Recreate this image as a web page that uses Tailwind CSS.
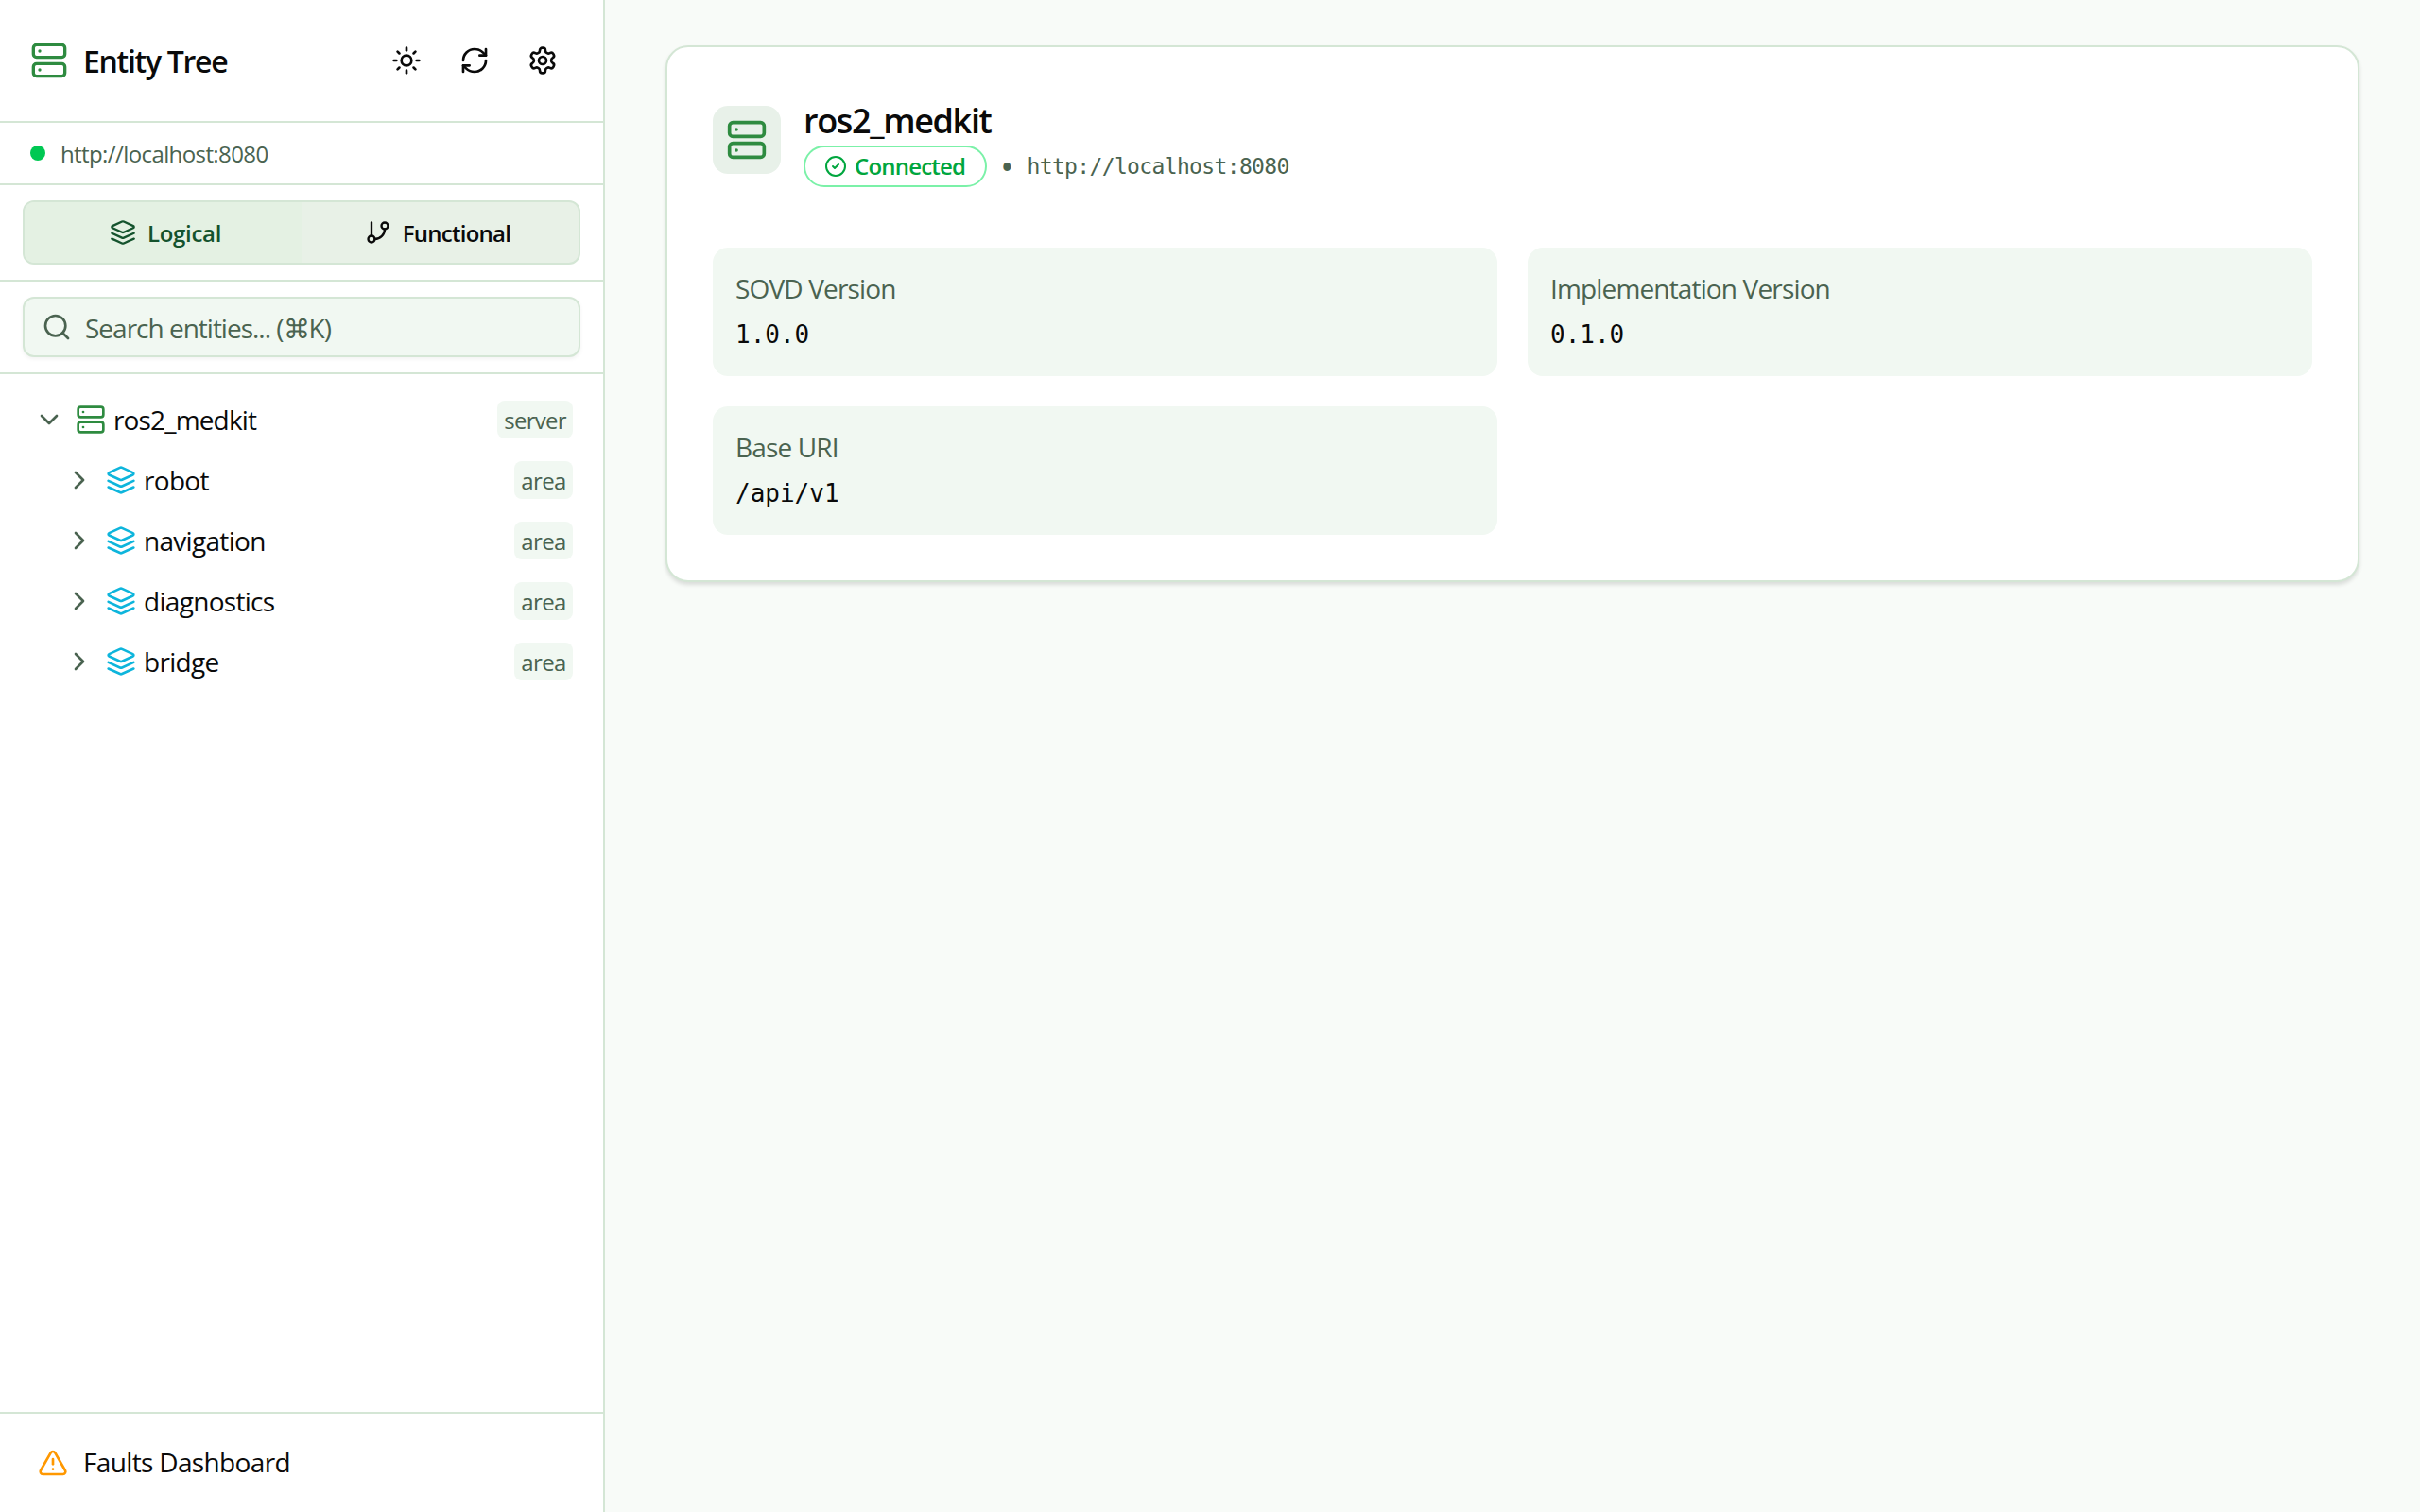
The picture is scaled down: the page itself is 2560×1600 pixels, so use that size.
<!DOCTYPE html>
<html lang="en">
<head>
<meta charset="utf-8">
<title>Entity Tree</title>
<script src="https://cdn.jsdelivr.net/npm/@tailwindcss/browser@4"></script>
</head>
<body class="h-[1600px] w-[2560px] overflow-hidden bg-[#f8fbf8] font-['Open_Sans',sans-serif] text-[#0a0a0a]">
<div class="flex h-full">
  <aside class="flex h-full w-[640px] flex-col border-r-2 border-[#d4e6d5] bg-white">
    <header class="flex h-[130px] items-center justify-between border-b-2 border-[#d4e6d5] pl-[32px] pr-[32px]">
      <div class="flex items-center gap-[16px]">
        <svg class="size-[40px] text-[#2e8b40]" viewBox="0 0 24 24" fill="none" stroke="currentColor" stroke-width="2" stroke-linecap="round" stroke-linejoin="round"><rect width="20" height="8" x="2" y="2" rx="2"/><rect width="20" height="8" x="2" y="14" rx="2"/><line x1="6" x2="6.01" y1="6" y2="6"/><line x1="6" x2="6.01" y1="18" y2="18"/></svg>
        <h1 class="pt-[2px] text-[32px] font-semibold tracking-[-1.3px]">Entity Tree</h1>
      </div>
      <div class="flex items-center gap-[8px]">
        <button class="p-[16px]"><svg class="size-[32px]" viewBox="0 0 24 24" fill="none" stroke="currentColor" stroke-width="2" stroke-linecap="round" stroke-linejoin="round"><circle cx="12" cy="12" r="4"/><path d="M12 2v2"/><path d="M12 20v2"/><path d="m4.93 4.93 1.41 1.41"/><path d="m17.66 17.66 1.41 1.41"/><path d="M2 12h2"/><path d="M20 12h2"/><path d="m6.34 17.66-1.41 1.41"/><path d="m19.07 4.93-1.41 1.41"/></svg></button>
        <button class="p-[16px]"><svg class="size-[32px]" viewBox="0 0 24 24" fill="none" stroke="currentColor" stroke-width="2" stroke-linecap="round" stroke-linejoin="round"><path d="M3 12a9 9 0 0 1 9-9 9.75 9.75 0 0 1 6.74 2.74L21 8"/><path d="M21 3v5h-5"/><path d="M21 12a9 9 0 0 1-9 9 9.75 9.75 0 0 1-6.74-2.74L3 16"/><path d="M8 16H3v5"/></svg></button>
        <button class="p-[16px]"><svg class="size-[32px]" viewBox="0 0 24 24" fill="none" stroke="currentColor" stroke-width="2" stroke-linecap="round" stroke-linejoin="round"><path d="M12.22 2h-.44a2 2 0 0 0-2 2v.18a2 2 0 0 1-1 1.73l-.43.25a2 2 0 0 1-2 0l-.15-.08a2 2 0 0 0-2.73.73l-.22.38a2 2 0 0 0 .73 2.73l.15.1a2 2 0 0 1 1 1.72v.51a2 2 0 0 1-1 1.74l-.15.09a2 2 0 0 0-.73 2.73l.22.38a2 2 0 0 0 2.73.73l.15-.08a2 2 0 0 1 2 0l.43.25a2 2 0 0 1 1 1.73V20a2 2 0 0 0 2 2h.44a2 2 0 0 0 2-2v-.18a2 2 0 0 1 1-1.73l.43-.25a2 2 0 0 1 2 0l.15.08a2 2 0 0 0 2.73-.73l.22-.39a2 2 0 0 0-.73-2.73l-.15-.08a2 2 0 0 1-1-1.74v-.5a2 2 0 0 1 1-1.74l.15-.09a2 2 0 0 0 .73-2.73l-.22-.38a2 2 0 0 0-2.73-.73l-.15.08a2 2 0 0 1-2 0l-.43-.25a2 2 0 0 1-1-1.73V4a2 2 0 0 0-2-2z"/><circle cx="12" cy="12" r="3"/></svg></button>
      </div>
    </header>

    <div class="flex h-[66px] items-center gap-[16px] border-b-2 border-[#d4e6d5] pl-[32px]">
      <span class="size-[16px] rounded-full bg-[#00c853]"></span>
      <span class="pt-[2px] text-[24px] tracking-[-0.6px] text-[#4a6350]">http://localhost:8080</span>
    </div>

    <div class="border-b-2 border-[#d4e6d5] px-[24px] py-[16px]">
      <div class="flex h-[68px] rounded-[12px] border-2 border-[#d4e6d5] bg-[#e8f1e7] text-[24px] font-semibold">
        <button class="flex flex-1 items-center justify-center gap-[12px] rounded-l-[10px] bg-[#e4f1e3] pl-[5px] text-[#14532d]">
          <svg class="size-[28px]" viewBox="0 0 24 24" fill="none" stroke="currentColor" stroke-width="2" stroke-linecap="round" stroke-linejoin="round"><path d="m12.83 2.18a2 2 0 0 0-1.66 0L2.6 6.08a1 1 0 0 0 0 1.83l8.58 3.91a2 2 0 0 0 1.66 0l8.58-3.9a1 1 0 0 0 0-1.83Z"/><path d="m22 17.65-9.17 4.16a2 2 0 0 1-1.66 0L2 17.65"/><path d="m22 12.65-9.17 4.16a2 2 0 0 1-1.66 0L2 12.65"/></svg>
          <span class="pt-[2px] tracking-[-0.3px]">Logical</span>
        </button>
        <button class="flex flex-1 items-center justify-center gap-[12px] pr-[5px]">
          <svg class="size-[28px]" viewBox="0 0 24 24" fill="none" stroke="currentColor" stroke-width="2" stroke-linecap="round" stroke-linejoin="round"><line x1="6" x2="6" y1="3" y2="15"/><circle cx="18" cy="6" r="3"/><circle cx="6" cy="18" r="3"/><path d="M18 9a9 9 0 0 1-9 9"/></svg>
          <span class="pt-[2px] tracking-[-0.75px]">Functional</span>
        </button>
      </div>
    </div>

    <div class="border-b-2 border-[#d4e6d5] px-[24px] py-[16px]">
      <div class="flex h-[64px] items-center gap-[14px] rounded-[12px] border-2 border-[#d4e6d5] bg-[#f1f8f2] pl-[18px] text-[#4a6350] shadow-[0_2px_4px_rgba(0,0,0,0.05)]">
        <svg class="size-[32px]" viewBox="0 0 24 24" fill="none" stroke="currentColor" stroke-width="2" stroke-linecap="round" stroke-linejoin="round"><circle cx="11" cy="11" r="8"/><path d="m21 21-4.3-4.3"/></svg>
        <span class="pt-[2px] text-[28px] tracking-[-1px]">Search entities... (⌘K)</span>
      </div>
    </div>

    <nav class="flex-1 py-[16px] pl-[36px] pr-[32px]">
      <div class="flex h-[64px] items-center">
        <svg class="size-[32px] shrink-0 text-[#4a6350]" viewBox="0 0 24 24" fill="none" stroke="currentColor" stroke-width="2" stroke-linecap="round" stroke-linejoin="round"><path d="m6 9 6 6 6-6"/></svg>
        <svg class="ml-[12px] size-[32px] shrink-0 text-[#2e8b40]" viewBox="0 0 24 24" fill="none" stroke="currentColor" stroke-width="2" stroke-linecap="round" stroke-linejoin="round"><rect width="20" height="8" x="2" y="2" rx="2"/><rect width="20" height="8" x="2" y="14" rx="2"/><line x1="6" x2="6.01" y1="6" y2="6"/><line x1="6" x2="6.01" y1="18" y2="18"/></svg>
        <span class="ml-[8px] flex-1 text-[28px] tracking-[-0.85px]">ros2_medkit</span>
        <span class="flex h-[40px] w-[80px] items-center justify-center rounded-[8px] bg-[#f1f8f2] pt-[2px] text-[24px] tracking-[-0.75px] text-[#4a6350]">server</span>
      </div>
      <div class="flex h-[64px] items-center pl-[32px]">
        <svg class="size-[32px] shrink-0 text-[#4a6350]" viewBox="0 0 24 24" fill="none" stroke="currentColor" stroke-width="2" stroke-linecap="round" stroke-linejoin="round"><path d="m9 18 6-6-6-6"/></svg>
        <svg class="ml-[12px] size-[32px] shrink-0 text-[#0eb5dc]" viewBox="0 0 24 24" fill="none" stroke="currentColor" stroke-width="2" stroke-linecap="round" stroke-linejoin="round"><path d="m12.83 2.18a2 2 0 0 0-1.66 0L2.6 6.08a1 1 0 0 0 0 1.83l8.58 3.91a2 2 0 0 0 1.66 0l8.58-3.9a1 1 0 0 0 0-1.83Z"/><path d="m22 17.65-9.17 4.16a2 2 0 0 1-1.66 0L2 17.65"/><path d="m22 12.65-9.17 4.16a2 2 0 0 1-1.66 0L2 12.65"/></svg>
        <span class="ml-[8px] flex-1 text-[28px] tracking-[-0.7px]">robot</span>
        <span class="flex h-[40px] w-[62px] items-center justify-center rounded-[8px] bg-[#f1f8f2] pt-[2px] text-[24px] tracking-[-0.6px] text-[#4a6350]">area</span>
      </div>
      <div class="flex h-[64px] items-center pl-[32px]">
        <svg class="size-[32px] shrink-0 text-[#4a6350]" viewBox="0 0 24 24" fill="none" stroke="currentColor" stroke-width="2" stroke-linecap="round" stroke-linejoin="round"><path d="m9 18 6-6-6-6"/></svg>
        <svg class="ml-[12px] size-[32px] shrink-0 text-[#0eb5dc]" viewBox="0 0 24 24" fill="none" stroke="currentColor" stroke-width="2" stroke-linecap="round" stroke-linejoin="round"><path d="m12.83 2.18a2 2 0 0 0-1.66 0L2.6 6.08a1 1 0 0 0 0 1.83l8.58 3.91a2 2 0 0 0 1.66 0l8.58-3.9a1 1 0 0 0 0-1.83Z"/><path d="m22 17.65-9.17 4.16a2 2 0 0 1-1.66 0L2 17.65"/><path d="m22 12.65-9.17 4.16a2 2 0 0 1-1.66 0L2 12.65"/></svg>
        <span class="ml-[8px] flex-1 text-[28px] tracking-[-0.7px]">navigation</span>
        <span class="flex h-[40px] w-[62px] items-center justify-center rounded-[8px] bg-[#f1f8f2] pt-[2px] text-[24px] tracking-[-0.6px] text-[#4a6350]">area</span>
      </div>
      <div class="flex h-[64px] items-center pl-[32px]">
        <svg class="size-[32px] shrink-0 text-[#4a6350]" viewBox="0 0 24 24" fill="none" stroke="currentColor" stroke-width="2" stroke-linecap="round" stroke-linejoin="round"><path d="m9 18 6-6-6-6"/></svg>
        <svg class="ml-[12px] size-[32px] shrink-0 text-[#0eb5dc]" viewBox="0 0 24 24" fill="none" stroke="currentColor" stroke-width="2" stroke-linecap="round" stroke-linejoin="round"><path d="m12.83 2.18a2 2 0 0 0-1.66 0L2.6 6.08a1 1 0 0 0 0 1.83l8.58 3.91a2 2 0 0 0 1.66 0l8.58-3.9a1 1 0 0 0 0-1.83Z"/><path d="m22 17.65-9.17 4.16a2 2 0 0 1-1.66 0L2 17.65"/><path d="m22 12.65-9.17 4.16a2 2 0 0 1-1.66 0L2 12.65"/></svg>
        <span class="ml-[8px] flex-1 text-[28px] tracking-[-0.7px]">diagnostics</span>
        <span class="flex h-[40px] w-[62px] items-center justify-center rounded-[8px] bg-[#f1f8f2] pt-[2px] text-[24px] tracking-[-0.6px] text-[#4a6350]">area</span>
      </div>
      <div class="flex h-[64px] items-center pl-[32px]">
        <svg class="size-[32px] shrink-0 text-[#4a6350]" viewBox="0 0 24 24" fill="none" stroke="currentColor" stroke-width="2" stroke-linecap="round" stroke-linejoin="round"><path d="m9 18 6-6-6-6"/></svg>
        <svg class="ml-[12px] size-[32px] shrink-0 text-[#0eb5dc]" viewBox="0 0 24 24" fill="none" stroke="currentColor" stroke-width="2" stroke-linecap="round" stroke-linejoin="round"><path d="m12.83 2.18a2 2 0 0 0-1.66 0L2.6 6.08a1 1 0 0 0 0 1.83l8.58 3.91a2 2 0 0 0 1.66 0l8.58-3.9a1 1 0 0 0 0-1.83Z"/><path d="m22 17.65-9.17 4.16a2 2 0 0 1-1.66 0L2 17.65"/><path d="m22 12.65-9.17 4.16a2 2 0 0 1-1.66 0L2 12.65"/></svg>
        <span class="ml-[8px] flex-1 text-[28px] tracking-[-0.7px]">bridge</span>
        <span class="flex h-[40px] w-[62px] items-center justify-center rounded-[8px] bg-[#f1f8f2] pt-[2px] text-[24px] tracking-[-0.6px] text-[#4a6350]">area</span>
      </div>
    </nav>

    <footer class="flex h-[106px] items-center gap-[16px] border-t-2 border-[#d4e6d5] pl-[40px]">
      <svg class="size-[32px] text-[#ff9800]" viewBox="0 0 24 24" fill="none" stroke="currentColor" stroke-width="2" stroke-linecap="round" stroke-linejoin="round"><path d="m21.73 18-8-14a2 2 0 0 0-3.48 0l-8 14A2 2 0 0 0 4 21h16a2 2 0 0 0 1.73-3"/><path d="M12 9v4"/><path d="M12 17h.01"/></svg>
      <span class="pb-[2px] text-[28px] font-medium tracking-[-0.65px]">Faults Dashboard</span>
    </footer>
  </aside>

  <main class="flex-1 px-[64px] py-[48px]">
    <section class="rounded-[24px] border-2 border-[#d4e6d5] bg-white p-[48px] shadow-[0_3px_4px_rgba(0,0,0,0.12)]">
      <div class="mb-[64px] flex h-[100px] items-center gap-[24px]">
        <div class="flex size-[72px] items-center justify-center rounded-[16px] bg-[#e8f1e9]">
          <svg class="size-[44px] text-[#2e8b40]" viewBox="0 0 24 24" fill="none" stroke="currentColor" stroke-width="2" stroke-linecap="round" stroke-linejoin="round"><rect width="20" height="8" x="2" y="2" rx="2"/><rect width="20" height="8" x="2" y="14" rx="2"/><line x1="6" x2="6.01" y1="6" y2="6"/><line x1="6" x2="6.01" y1="18" y2="18"/></svg>
        </div>
        <div>
          <h2 class="pt-[4px] text-[36px] font-semibold leading-[52px] tracking-[-1.35px]">ros2_medkit</h2>
          <div class="flex items-center">
            <span class="flex h-[44px] w-[194px] items-center gap-[8px] rounded-full border-2 border-[#7bf1a8] pl-[20px] text-[24px] font-semibold tracking-[-0.8px] text-[#00a63e]">
              <svg class="size-[24px] shrink-0" viewBox="0 0 24 24" fill="none" stroke="currentColor" stroke-width="2" stroke-linecap="round" stroke-linejoin="round"><circle cx="12" cy="12" r="10"/><path d="m9 12 2 2 4-4"/></svg>
              Connected
            </span>
            <span class="ml-[16px] text-[28px] font-bold leading-none text-[#4a6350]">•</span>
            <span class="ml-[16px] font-['DejaVu_Sans_Mono',monospace] text-[23px] tracking-[-0.65px] text-[#4a6350]">http://localhost:8080</span>
          </div>
        </div>
      </div>
      <div class="grid grid-cols-2 gap-[32px]">
        <div class="h-[136px] rounded-[16px] bg-[#f1f8f2] p-[24px]">
          <p class="text-[28px] leading-[38px] tracking-[-0.85px] text-[#4a6350]">SOVD Version</p>
          <p class="mt-[7px] font-['DejaVu_Sans_Mono',monospace] text-[26px] leading-[46px]">1.0.0</p>
        </div>
        <div class="h-[136px] rounded-[16px] bg-[#f1f8f2] p-[24px]">
          <p class="text-[28px] leading-[38px] tracking-[-0.85px] text-[#4a6350]">Implementation Version</p>
          <p class="mt-[7px] font-['DejaVu_Sans_Mono',monospace] text-[26px] leading-[46px]">0.1.0</p>
        </div>
        <div class="h-[136px] rounded-[16px] bg-[#f1f8f2] p-[24px]">
          <p class="text-[28px] leading-[38px] tracking-[-0.85px] text-[#4a6350]">Base URI</p>
          <p class="mt-[7px] font-['DejaVu_Sans_Mono',monospace] text-[26px] leading-[46px]">/api/v1</p>
        </div>
      </div>
    </section>
  </main>
</div>
</body>
</html>
